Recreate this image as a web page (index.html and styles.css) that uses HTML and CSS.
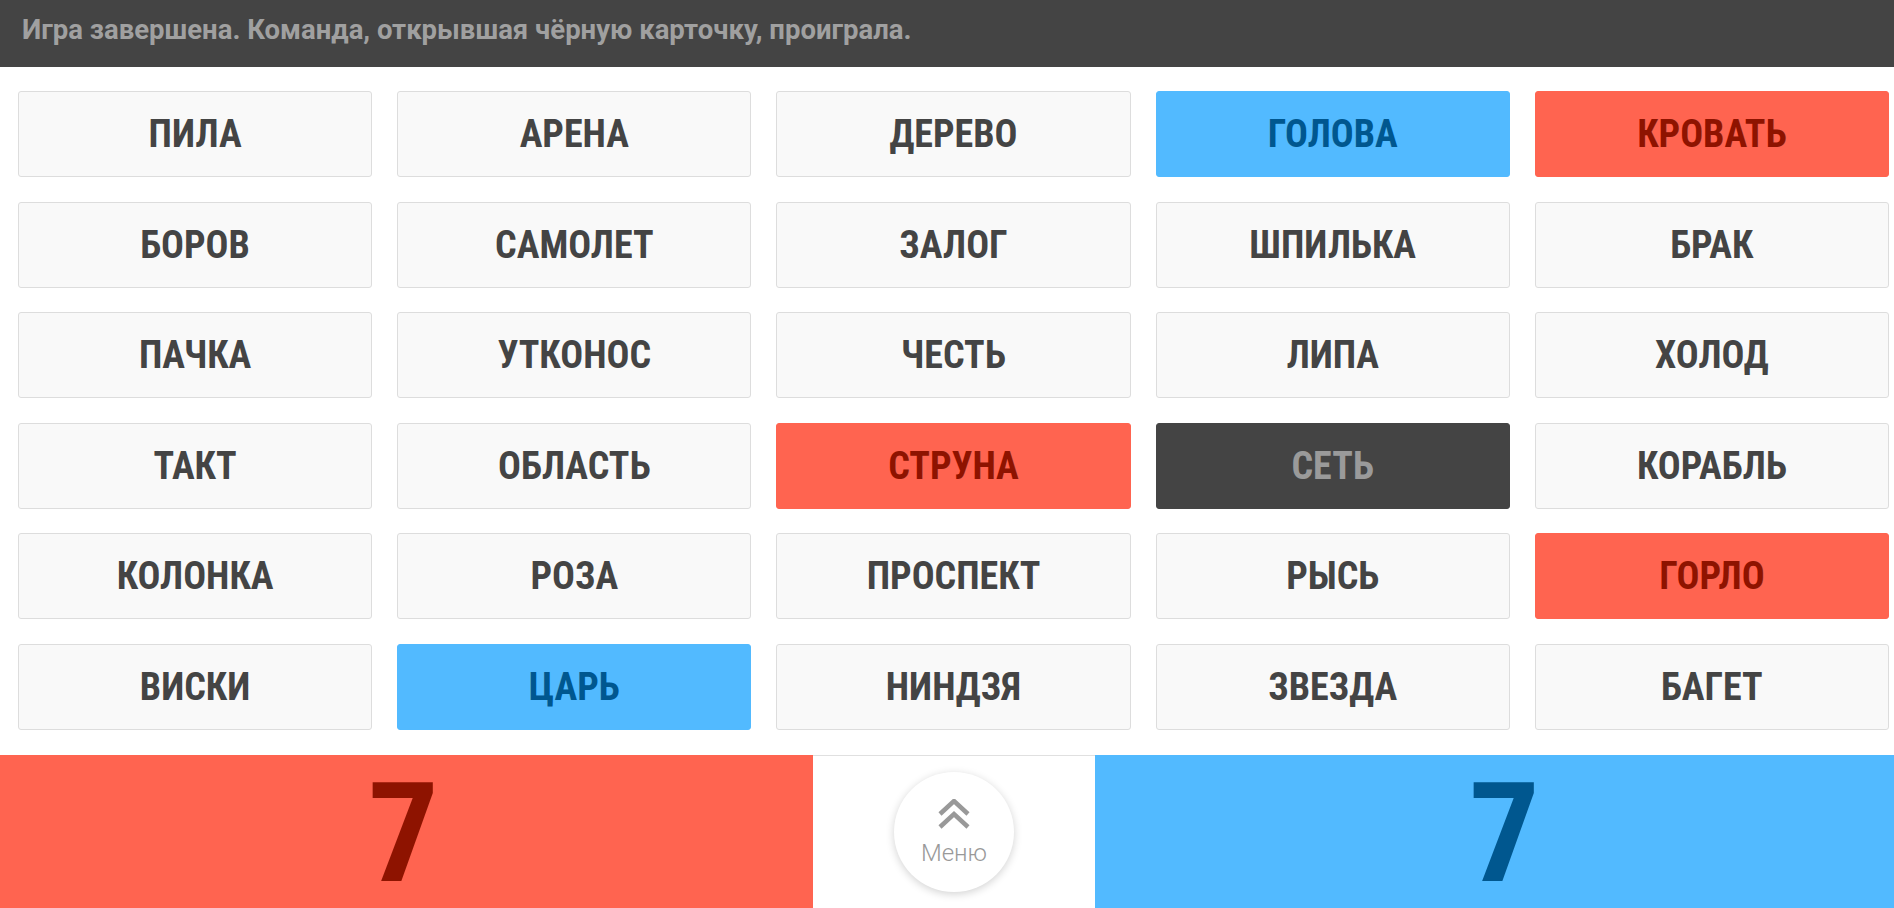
FILE: index.html
```html
<!DOCTYPE html>
<html>
	<head>
		<meta charset="UTF-8">
		<title>Кодовые имена</title>
		<link rel="stylesheet" href="styles.css">
	</head>
	<body>
		<div id="status">Игра завершена. Команда, открывшая чёрную карточку, проиграла.</div>

		<div id="board">
			<div class="card">ПИЛА</div>
			<div class="card">АРЕНА</div>
			<div class="card">ДЕРЕВО</div>
			<div class="card blue">ГОЛОВА</div>
			<div class="card red">КРОВАТЬ</div>

			<div class="card">БОРОВ</div>
			<div class="card">САМОЛЕТ</div>
			<div class="card">ЗАЛОГ</div>
			<div class="card">ШПИЛЬКА</div>
			<div class="card">БРАК</div>

			<div class="card">ПАЧКА</div>
			<div class="card">УТКОНОС</div>
			<div class="card">ЧЕСТЬ</div>
			<div class="card">ЛИПА</div>
			<div class="card">ХОЛОД</div>

			<div class="card">ТАКТ</div>
			<div class="card">ОБЛАСТЬ</div>
			<div class="card red">СТРУНА</div>
			<div class="card black">СЕТЬ</div>
			<div class="card">КОРАБЛЬ</div>

			<div class="card">КОЛОНКА</div>
			<div class="card">РОЗА</div>
			<div class="card">ПРОСПЕКТ</div>
			<div class="card">РЫСЬ</div>
			<div class="card red">ГОРЛО</div>

			<div class="card">ВИСКИ</div>
			<div class="card blue">ЦАРЬ</div>
			<div class="card">НИНДЗЯ</div>
			<div class="card">ЗВЕЗДА</div>
			<div class="card">БАГЕТ</div>
		</div>

		<div id="score">
			<div class="team red">7</div>
			<div class="middle">
				<div id="menu_btn">
					<svg width="32" height="30" viewBox="0 0 32 30">
						<polyline points="2,15 16,2 30,15" fill="none" stroke="#999" stroke-width="4.5"/>
						<polyline points="2,28 16,15 30,28" fill="none" stroke="#999" stroke-width="4.5"/>
					</svg>
					<span>Меню</span>
				</div>
			</div>
			<div class="team blue">7</div>
		</div>
	</body>
</html>
```

FILE: styles.css
```css
*{
	margin: 0;
	padding: 0;
	box-sizing: border-box;
}
body{
	font-family: Roboto, "Liberation Sans", sans-serif;
	background: #fff;
	overflow: hidden;
}
#status{
	height: 67px;
	line-height: 59px;
	padding-left: 22px;
	background-color: #444;
	color: #a0a0a0;
	font-size: 27.5px;
	font-weight: bold;
	white-space: nowrap;
}
#board{
	display: grid;
	grid-template-columns: repeat(5, 1fr);
	grid-auto-rows: 86px;
	gap: 24.6px 25px;
	padding: 24px 5px 0 18px;
	margin-bottom: 25px;
}
.card{
	display: flex;
	align-items: center;
	justify-content: center;
	background-color: #f9f9f9;
	border: 1px solid #ddd;
	border-radius: 3px;
	color: #444;
	font-size: 38px;
	font-weight: bold;
	font-stretch: 75%;
}
.card.blue{
	background-color: #52baff;
	border-color: #52baff;
	color: #00578f;
}
.card.red{
	background-color: #ff6450;
	border-color: #ff6450;
	color: #8e1300;
}
.card.black{
	background-color: #444;
	border-color: #444;
	color: #9a9a9a;
}
#score{
	display: grid;
	grid-template-columns: 813px 282px 1fr;
	height: 153px;
	overflow: hidden;
}
.team{
	display: flex;
	align-items: center;
	justify-content: center;
	padding-top: 4px;
	font-size: 140px;
	font-weight: bold;
	font-stretch: 78%;
	line-height: 140px;
}
.team.red{
	background-color: #ff6450;
	color: #8e1300;
	padding-right: 6px;
}
.team.blue{
	background-color: #52baff;
	color: #00578f;
	padding-left: 20px;
}
.middle{
	border-top: 1px solid #e0e0e0;
	display: flex;
	justify-content: center;
	padding-top: 16px;
}
#menu_btn{
	width: 120px;
	height: 120px;
	border-radius: 50%;
	background: #fff;
	box-shadow: 0 2px 8px rgba(0,0,0,0.18);
	display: flex;
	flex-direction: column;
	align-items: center;
	justify-content: center;
	cursor: pointer;
}
#menu_btn svg{
	margin-bottom: 12px;
}
#menu_btn span{
	font-size: 24px;
	line-height: 24px;
	font-weight: 300;
	color: #999;
}
```
